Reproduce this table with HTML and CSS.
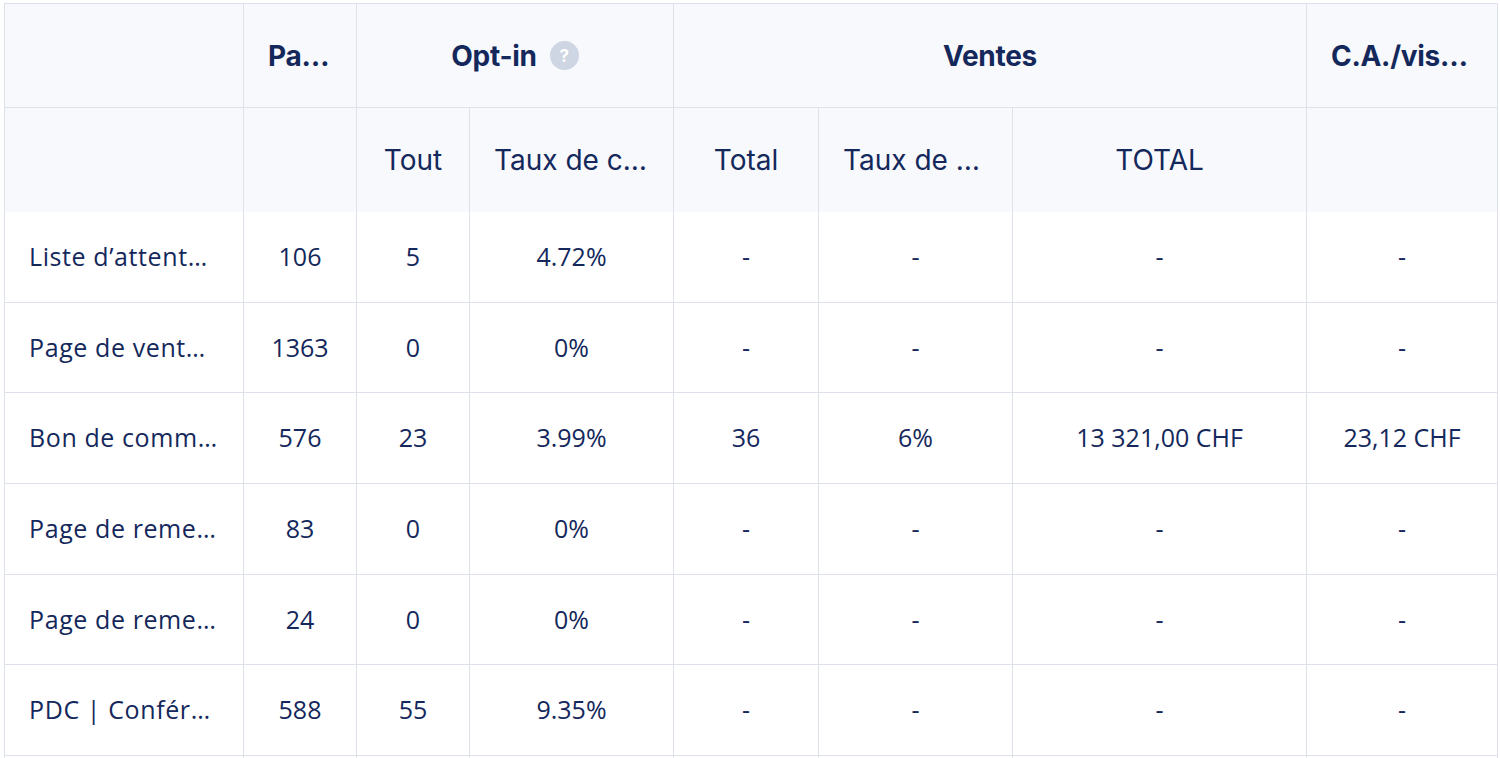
FILE: index.html
```html
<!DOCTYPE html>
<html lang="fr">
<head>
<meta charset="utf-8">
<title>Statistiques</title>
<link rel="stylesheet" href="styles.css">
</head>
<body>
<div class="wrap">
<table class="stats">
  <colgroup>
    <col class="c-name"><col class="c-pa"><col class="c-tout"><col class="c-taux1">
    <col class="c-total"><col class="c-taux2"><col class="c-sum"><col class="c-ca">
  </colgroup>
  <thead>
    <tr class="h1">
      <th></th>
      <th>Pages vues</th>
      <th colspan="2"><span class="optin">Opt-in <span class="help">?</span></span></th>
      <th colspan="3">Ventes</th>
      <th>C.A./visiteur</th>
    </tr>
    <tr class="h2">
      <th></th>
      <th></th>
      <th>Tout</th>
      <th>Taux de conversion</th>
      <th>Total</th>
      <th>Taux de conversion</th>
      <th>TOTAL</th>
      <th></th>
    </tr>
  </thead>
  <tbody>
    <tr><td class="name">Liste d’attente du programme</td><td>106</td><td>5</td><td>4.72%</td><td>-</td><td>-</td><td>-</td><td>-</td></tr>
    <tr><td class="name">Page de vente du programme</td><td>1363</td><td>0</td><td>0%</td><td>-</td><td>-</td><td>-</td><td>-</td></tr>
    <tr><td class="name">Bon de commande</td><td>576</td><td>23</td><td>3.99%</td><td>36</td><td>6%</td><td>13 321,00 CHF</td><td>23,12 CHF</td></tr>
    <tr><td class="name">Page de remerciement</td><td>83</td><td>0</td><td>0%</td><td>-</td><td>-</td><td>-</td><td>-</td></tr>
    <tr><td class="name">Page de remerciement</td><td>24</td><td>0</td><td>0%</td><td>-</td><td>-</td><td>-</td><td>-</td></tr>
    <tr><td class="name">PDC | Conférence en ligne</td><td>588</td><td>55</td><td>9.35%</td><td>-</td><td>-</td><td>-</td><td>-</td></tr>
    <tr><td class="name">Page de remerciement</td><td>55</td><td>0</td><td>0%</td><td>-</td><td>-</td><td>-</td><td>-</td></tr>
  </tbody>
</table>
</div>
</body>
</html>
```
FILE: styles.css
```css
html, body {
  margin: 0;
  padding: 0;
  background: #ffffff;
}

.wrap {
  padding: 3px 0 0 4px;
}

.stats {
  border-collapse: collapse;
  table-layout: fixed;
  width: 1493px;
  color: #14285b;
}

.c-name { width: 239px; }
.c-pa { width: 113px; }
.c-tout { width: 113px; }
.c-taux1 { width: 204px; }
.c-total { width: 145px; }
.c-taux2 { width: 194px; }
.c-sum { width: 294px; }
.c-ca { width: 191px; }

.stats th,
.stats td {
  border: 1px solid #dde1ea;
  padding: 0 24px;
  white-space: nowrap;
  overflow: hidden;
  text-overflow: ellipsis;
  text-align: center;
}

.stats thead th {
  background: #f8f9fc;
}

.stats thead tr.h2 th {
  border-bottom: none;
}

.stats tbody tr:first-child td {
  border-top: none;
}

.h1 th {
  height: 103px;
  font-family: "Inter", "Liberation Sans", sans-serif;
  font-weight: 700;
  font-size: 28px;
  letter-spacing: -0.3px;
}

.h2 th {
  height: 104px;
  font-family: "Inter", "Liberation Sans", sans-serif;
  font-weight: 400;
  font-size: 28px;
}

.stats td {
  height: 87.7px;
  font-family: "Open Sans", "Liberation Sans", sans-serif;
  font-size: 25px;
  font-weight: 400;
  padding-bottom: 2px;
}

.stats td.name {
  text-align: left;
  letter-spacing: 0.6px;
}

.optin {
  display: inline-flex;
  align-items: center;
  gap: 13px;
}

.help {
  display: inline-flex;
  align-items: center;
  justify-content: center;
  width: 29px;
  height: 29px;
  border-radius: 50%;
  background: #cdd6e2;
  color: #ffffff;
  font-size: 17px;
  font-weight: 700;
  letter-spacing: 0;
}
```
